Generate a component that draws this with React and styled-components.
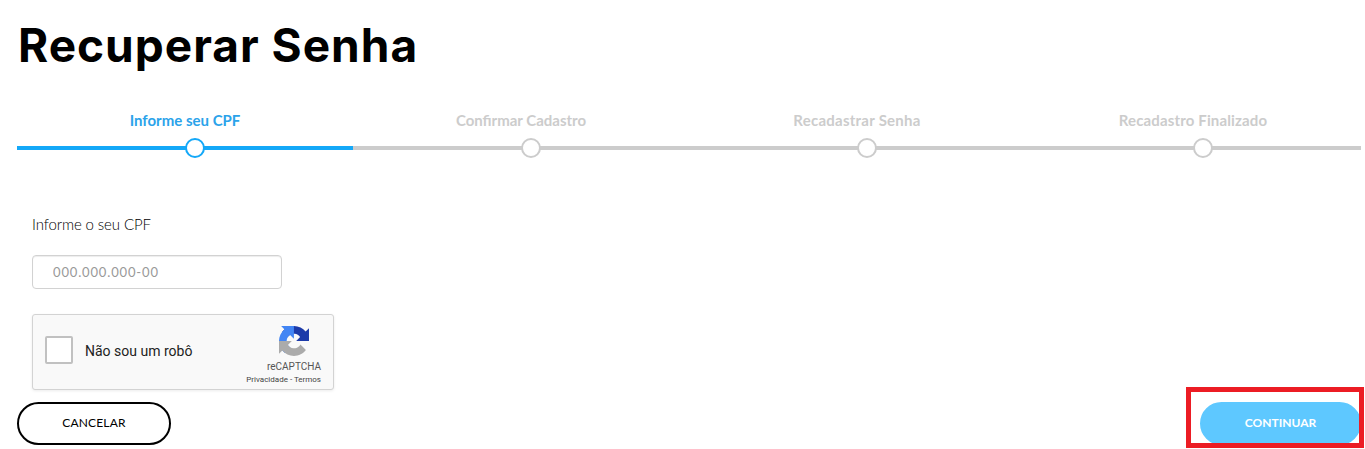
import React from "react";
import styled, { createGlobalStyle } from "styled-components";

const GlobalStyle = createGlobalStyle`
  *, *::before, *::after { box-sizing: border-box; }
  body {
    margin: 0;
    background: #fff;
    color: #000;
    font-family: Lato, "Liberation Sans", sans-serif;
    overflow: hidden;
  }
`;

const Page = styled.main`
  height: 449px;
  padding: 16px 4px 0 17px;
  display: flex;
  flex-direction: column;
`;

const Title = styled.h1`
  margin: 0 0 0 1px;
  height: 91px;
  font-family: Inter, Lato, sans-serif;
  font-size: 46px;
  line-height: 58px;
  font-weight: 700;
  letter-spacing: 1px;
  white-space: nowrap;
`;

const Steps = styled.ol`
  display: grid;
  grid-template-columns: repeat(4, 1fr);
  list-style: none;
  margin: 0;
  padding: 0;
`;

const Step = styled.li`
  --tone: ${(p) => (p.$active ? "#14a8f8" : "#ccc")};
  height: 51px;
  display: flex;
  flex-direction: column;
  align-items: center;
`;

const StepLabel = styled.span`
  height: 31px;
  line-height: 26px;
  font-size: 15px;
  font-weight: 700;
  color: ${(p) => (p.$active ? "#2ba3ea" : "#ccc")};
  letter-spacing: ${(p) => p.$spacing}px;
  white-space: nowrap;
`;

const Track = styled.div`
  width: 100%;
  height: 20px;
  padding-left: 50%;
  background: linear-gradient(var(--tone), var(--tone)) 0 8px / 100% 4px no-repeat;
`;

const Dot = styled.div`
  width: 20px;
  height: 20px;
  border: 2px solid var(--tone);
  border-radius: 50%;
  background: #fff;
`;

const Form = styled.form`
  padding: 55px 15px 0;
  display: flex;
  flex-direction: column;
  align-items: flex-start;
`;

const Label = styled.label`
  height: 42px;
  line-height: 22px;
  font-size: 15px;
  font-weight: 300;
  color: #000;
  letter-spacing: -0.1px;
`;

const Input = styled.input`
  width: 250px;
  height: 34px;
  padding: 0 20px;
  border: 1px solid #d2d2d2;
  border-radius: 4px;
  box-shadow: inset 0 1px 1px rgba(0, 0, 0, 0.075);
  font: 400 13px Lato, "Liberation Sans", sans-serif;
  letter-spacing: 0.85px;
  outline: none;
  &::placeholder { color: #999; opacity: 1; }
`;

const Captcha = styled.div`
  width: 302px;
  height: 76px;
  margin-top: 25px;
  padding: 0 12px;
  display: flex;
  align-items: center;
  border: 1px solid #d3d3d3;
  border-radius: 3px;
  background: #f9f9f9;
  box-shadow: 0 1px 3px rgba(0, 0, 0, 0.08);
  font-family: Roboto, sans-serif;
`;

const CheckBox = styled.span`
  width: 28px;
  height: 28px;
  margin-top: -4px;
  border: 2px solid #c1c1c1;
  border-radius: 2px;
  background: #fff;
`;

const CaptchaText = styled.span`
  margin: -2px 0 0 12px;
  flex: 1;
  font-size: 14px;
  line-height: 17px;
  color: #222;
`;

const Brand = styled.div`
  align-self: flex-start;
  padding-top: 11px;
  display: flex;
  flex-direction: column;
  align-items: flex-end;
  color: #555;
`;

const Logo = styled.svg`
  width: 30px;
  height: 30px;
  margin-right: 12px;
`;

const BrandName = styled.span`
  margin-top: 5px;
  font-size: 10px;
  line-height: 12px;
`;

const Links = styled.span`
  margin-top: 2px;
  font-size: 8px;
  line-height: 10px;
  color: #444;
  white-space: nowrap;
`;

const Actions = styled.div`
  margin-top: 12px;
  display: flex;
  justify-content: space-between;
`;

const Button = styled.button`
  width: ${(p) => (p.$primary ? 161 : 154)}px;
  height: 43px;
  padding: 0 0 2px;
  border: 2px solid ${(p) => (p.$primary ? "#5ec8ff" : "#000")};
  border-radius: 22px;
  background: ${(p) => (p.$primary ? "#5ec8ff" : "#fff")};
  color: ${(p) => (p.$primary ? "#fff" : "#000")};
  font: ${(p) => (p.$primary ? 700 : 400)} 12px Lato, "Liberation Sans", sans-serif;
  letter-spacing: ${(p) => p.$spacing}px;
`;

const Highlighted = styled.div`
  position: relative;
  display: flex;
  &::after {
    content: "";
    position: absolute;
    top: -15px;
    left: -14px;
    width: 178px;
    height: 61px;
    border: 5px solid #ec1c24;
    pointer-events: none;
  }
`;

const steps = [
  { label: "Informe seu CPF", active: true, spacing: 0 },
  { label: "Confirmar Cadastro", spacing: 0 },
  { label: "Recadastrar Senha", spacing: 0.25 },
  { label: "Recadastro Finalizado", spacing: 0.15 },
];

export default function App() {
  return (
    <>
      <GlobalStyle />
      <Page>
        <Title>Recuperar Senha</Title>
        <Steps>
          {steps.map((s) => (
            <Step key={s.label} $active={s.active}>
              <StepLabel $active={s.active} $spacing={s.spacing}>{s.label}</StepLabel>
              <Track><Dot /></Track>
            </Step>
          ))}
        </Steps>
        <Form>
          <Label htmlFor="cpf">Informe o seu CPF</Label>
          <Input id="cpf" placeholder="000.000.000-00" />
          <Captcha>
            <CheckBox />
            <CaptchaText>Não sou um robô</CaptchaText>
            <Brand>
              <Logo viewBox="0 0 64 64">
                <path fill="#1c3aa9" d="M64 31.955l-.033-1.37V4.687l-7.16 7.16C50.948 4.674 42.033.093 32.05.093c-10.4 0-19.622 4.96-25.458 12.64l11.736 11.86a15.55 15.55 0 0 1 4.754-5.334c2.05-1.6 4.952-2.906 8.968-2.906.485 0 .86.057 1.135.163 4.976.393 9.288 3.14 11.828 7.124l-8.307 8.307L64 31.953" />
                <path fill="#4285f4" d="M31.862.094l-1.37.033H4.594l7.16 7.16C4.58 13.147 0 22.06 0 32.046c0 10.4 4.96 19.622 12.64 25.458L24.5 45.768a15.55 15.55 0 0 1-5.334-4.754c-1.6-2.05-2.906-4.952-2.906-8.968 0-.485.057-.86.163-1.135.393-4.976 3.14-9.288 7.124-11.828l8.307 8.307L31.86.095" />
                <path fill="#ababab" d="M.001 32.045l.033 1.37v25.898l7.16-7.16c5.86 7.173 14.774 11.754 24.76 11.754 10.4 0 19.622-4.96 25.458-12.64l-11.736-11.86a15.55 15.55 0 0 1-4.754 5.334c-2.05 1.6-4.952 2.906-8.968 2.906-.485 0-.86-.057-1.135-.163-4.976-.393-9.288-3.14-11.828-7.124l8.307-8.307c-10.522.04-22.4.066-27.295-.005" />
              </Logo>
              <BrandName>reCAPTCHA</BrandName>
              <Links>Privacidade - Termos</Links>
            </Brand>
          </Captcha>
        </Form>
        <Actions>
          <Button type="button" $spacing={0.15}>CANCELAR</Button>
          <Highlighted>
            <Button type="button" $primary $spacing={0}>CONTINUAR</Button>
          </Highlighted>
        </Actions>
      </Page>
    </>
  );
}
